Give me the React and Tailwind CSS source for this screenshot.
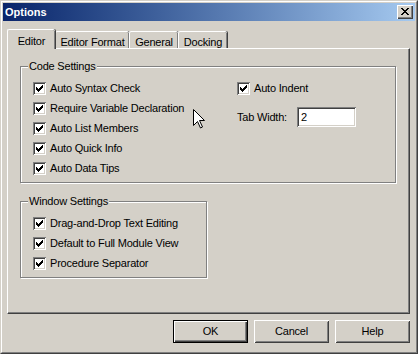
import React from 'react';

const CHECK_PATH =
  'M9 3h1v1h-1z M8 4h2v1h-2z M3 5h1v1h-1z M7 5h3v1h-3z M3 6h2v1h-2z M6 6h3v1h-3z M3 7h5v1h-5z M4 8h3v1h-3z M5 9h1v1h-1z';

function CheckBox() {
  return (
    <span className="block w-[13px] h-[13px] shrink-0 bg-white shadow-[inset_1px_1px_0_#808080,inset_-1px_-1px_0_#ffffff,inset_2px_2px_0_#404040,inset_-2px_-2px_0_#d4d0c8]">
      <svg width="13" height="13" viewBox="0 0 13 13" shapeRendering="crispEdges" className="block">
        <path d={CHECK_PATH} fill="#000" />
      </svg>
    </span>
  );
}

function CheckRow({ label }) {
  return (
    <div className="flex items-center h-[20px]">
      <CheckBox />
      <span className="ml-[4px] whitespace-nowrap">{label}</span>
    </div>
  );
}

function GroupBox({ title, className, children }) {
  return (
    <fieldset
      className={`border border-[#808080] shadow-[inset_1px_1px_0_#ffffff,1px_1px_0_#ffffff] ${className}`}
    >
      <legend className="ml-[7px] px-[1px] leading-[14px] bg-[#d4d0c8]">{title}</legend>
      {children}
    </fieldset>
  );
}

function Tab({ label, active, width }) {
  if (active) {
    return (
      <div
        className={`relative z-10 -mb-[1px] h-[20px] ${width} flex justify-center pt-[3px] bg-[#d4d0c8] border-l border-t border-white rounded-tl-[2px] rounded-tr-[2px] shadow-[inset_-1px_0_0_#808080,1px_0_0_#404040]`}
      >
        {label}
      </div>
    );
  }
  return (
    <div
      className={`h-[17px] ${width} flex justify-center pt-[2px] bg-[#d4d0c8] border-l border-t border-white rounded-tl-[2px] rounded-tr-[2px] shadow-[inset_-1px_0_0_#808080,1px_0_0_#404040]`}
    >
      {label}
    </div>
  );
}

function Button({ label, isDefault }) {
  if (isDefault) {
    return (
      <button className="w-[75px] h-[23px] border border-black bg-[#d4d0c8] shadow-[inset_1px_1px_0_#ffffff,inset_-1px_-1px_0_#404040,inset_-2px_-2px_0_#808080]">
        {label}
      </button>
    );
  }
  return (
    <button className="w-[75px] h-[23px] bg-[#d4d0c8] shadow-[inset_1px_1px_0_#ffffff,inset_-1px_-1px_0_#404040,inset_2px_2px_0_#d4d0c8,inset_-2px_-2px_0_#808080]">
      {label}
    </button>
  );
}

export default function App() {
  return (
    <div
      className="relative w-[418px] h-[354px] bg-[#d4d0c8] text-black text-[11px] tracking-[-0.2px] border border-[#d4d0c8] border-r-[#404040] border-b-[#404040]"
      style={{ fontFamily: '"Liberation Sans", Arial, sans-serif' }}
    >
      <div className="h-full border border-white border-r-[#808080] border-b-[#808080] p-[1px] flex flex-col">
        {/* Title bar */}
        <div className="h-[18px] flex items-center justify-between bg-linear-to-r from-[#0a246a] to-[#a6caf0] pl-[2px] pr-[2px]">
          <span className="text-white font-bold tracking-normal">Options</span>
          <span className="w-[16px] h-[14px] flex items-center justify-center bg-[#d4d0c8] shadow-[inset_1px_1px_0_#ffffff,inset_-1px_-1px_0_#404040,inset_-2px_-2px_0_#808080]">
            <svg width="8" height="7" viewBox="0 0 8 7" shapeRendering="crispEdges" className="-mt-[1px] -ml-[1px]">
              <path
                d="M0 0h2v1h-2z M6 0h2v1h-2z M1 1h2v1h-2z M5 1h2v1h-2z M2 2h4v1h-4z M3 3h2v1h-2z M2 4h4v1h-4z M1 5h2v1h-2z M5 5h2v1h-2z M0 6h2v1h-2z M6 6h2v1h-2z"
                fill="#000"
              />
            </svg>
          </span>
        </div>

        {/* Body */}
        <div className="pl-[4px] pr-[5px] pt-[8px]">
          {/* Tabs */}
          <div className="flex items-end">
            <Tab label="Editor" active width="w-[48px]" />
            <Tab label="Editor Format" width="w-[74px]" />
            <Tab label="General" width="w-[49px]" />
            <Tab label="Docking" width="w-[49px]" />
          </div>

          {/* Tab panel */}
          <div className="h-[266px] border border-white border-r-[#404040] border-b-[#404040] shadow-[inset_-1px_-1px_0_#808080] pl-[12px] pr-[12px] pt-[10px]">
            <GroupBox title="Code Settings" className="w-[376px] pb-[4px]">
              <div className="flex pl-[12px] pt-[5px]">
                <div className="w-[204px]">
                  <CheckRow label="Auto Syntax Check" />
                  <CheckRow label="Require Variable Declaration" />
                  <CheckRow label="Auto List Members" />
                  <CheckRow label="Auto Quick Info" />
                  <CheckRow label="Auto Data Tips" />
                </div>
                <div>
                  <CheckRow label="Auto Indent" />
                  <div className="flex items-center h-[20px] mt-[9px]">
                    <span className="w-[60px]">Tab Width:</span>
                    <span className="w-[59px] h-[20px] flex items-center pl-[4px] bg-white shadow-[inset_1px_1px_0_#808080,inset_-1px_-1px_0_#ffffff,inset_2px_2px_0_#404040,inset_-2px_-2px_0_#d4d0c8]">
                      2
                    </span>
                  </div>
                </div>
              </div>
            </GroupBox>

            <GroupBox title="Window Settings" className="w-[187px] mt-[11px] pb-[4px]">
              <div className="pl-[12px] pt-[5px]">
                <CheckRow label="Drag-and-Drop Text Editing" />
                <CheckRow label="Default to Full Module View" />
                <CheckRow label="Procedure Separator" />
              </div>
            </GroupBox>
          </div>

          {/* Buttons */}
          <div className="flex justify-end gap-[6px] mt-[6px]">
            <Button label="OK" isDefault />
            <Button label="Cancel" />
            <Button label="Help" />
          </div>
        </div>
      </div>

      {/* Mouse cursor */}
      <svg
        width="12"
        height="20"
        viewBox="0 0 12 20"
        className="absolute left-[192px] top-[108px] pointer-events-none"
      >
        <path
          d="M0.5 0.5 L0.5 16.5 L4.5 12.5 L7.5 19 L9.5 18 L6.5 11.5 L11.5 11.5 Z"
          fill="#fff"
          stroke="#000"
          strokeWidth="1"
          strokeLinejoin="miter"
        />
      </svg>
    </div>
  );
}
